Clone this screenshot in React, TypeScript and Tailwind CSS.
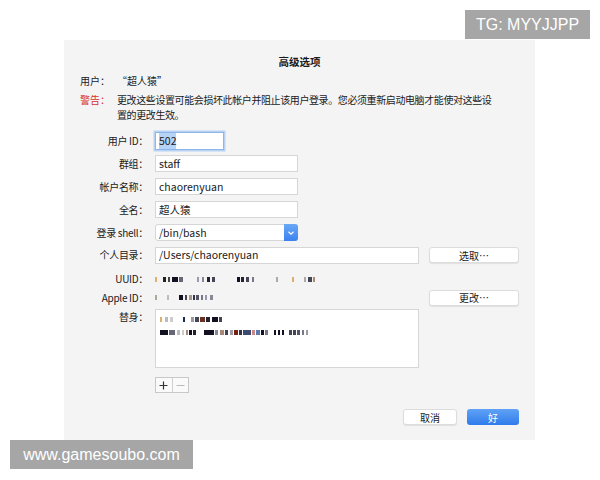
import React from "react";

type Seg = [number, number, string]; // gap before, width, colour

const uuid: Seg[] = [
  [0, 2, "#e0b070"], [6, 3, "#222"], [2, 2, "#444"], [2, 6, "#112"], [1, 4, "#667"],
  [14, 2, "#99a"], [3, 2, "#889"], [3, 3, "#223"], [2, 3, "#445"],
  [22, 3, "#112"], [1, 3, "#223"], [2, 3, "#445"], [3, 2, "#778"],
  [22, 2, "#aaa"], [14, 2, "#d9b070"], [10, 2, "#aaa"], [2, 4, "#445"], [1, 2, "#a87"],
];
const appleId: Seg[] = [
  [0, 2, "#aa9"], [10, 2, "#bbb"], [10, 4, "#112"], [2, 2, "#445"], [2, 3, "#a98"],
  [1, 2, "#334"], [1, 3, "#556"], [2, 2, "#778"], [2, 2, "#99a"], [3, 3, "#889"],
];
const alias1: Seg[] = [
  [0, 2, "#d9b070"], [3, 3, "#bbb"], [2, 3, "#ccc"], [10, 2, "#1a2a55"], [6, 3, "#99a"],
  [1, 4, "#445"], [1, 5, "#6a3020"], [1, 4, "#223"], [2, 6, "#112"], [1, 3, "#445"],
];
const alias2: Seg[] = [
  [0, 8, "#112"], [1, 6, "#667"], [2, 3, "#bbb"], [2, 2, "#ccc"], [2, 2, "#a87"],
  [1, 3, "#112"], [1, 3, "#223"], [8, 10, "#112"], [1, 3, "#889"], [2, 4, "#a87"],
  [1, 3, "#445"], [2, 3, "#99a"], [1, 4, "#7a2010"], [1, 3, "#334"], [1, 8, "#3a4a70"],
  [1, 3, "#c88"], [1, 4, "#5a7ab0"], [1, 3, "#112"], [1, 3, "#778"], [6, 2, "#112"],
  [2, 2, "#112"], [2, 2, "#112"], [5, 3, "#445"], [1, 3, "#445"], [1, 3, "#556"],
  [2, 2, "#778"], [2, 2, "#99a"],
];

function Pixels({ segs, h = 5 }: { segs: Seg[]; h?: number }) {
  return (
    <div className="flex items-center">
      {segs.map(([g, w, c], i) => (
        <span
          key={i}
          className="inline-block"
          style={{ marginLeft: g, width: w, height: h, background: c }}
        />
      ))}
    </div>
  );
}

function Row({
  label,
  children,
  className = "",
}: {
  label: string;
  children?: React.ReactNode;
  className?: string;
}) {
  return (
    <div className={`flex items-center ${className}`}>
      <div className="w-[84px] text-right text-[10px] tracking-[-0.3px] text-[#1a1a1a] leading-none">
        {label}
      </div>
      <div className="ml-[7px] flex items-center">{children}</div>
    </div>
  );
}

function Field({ value, w = "w-[143px]" }: { value: string; w?: string }) {
  return (
    <div
      className={`${w} h-[17px] bg-white border border-[#d6d6d6] flex items-center px-[3px] text-[10.5px] text-[#1a1a1a]`}
    >
      {value}
    </div>
  );
}

function MacButton({ label, w, className = "" }: { label: string; w: string; className?: string }) {
  return (
    <div
      className={`${w} h-[16px] bg-white border border-[#dcdcdc] rounded-[3px] shadow-[0_1px_1px_rgba(0,0,0,0.08)] flex items-center justify-center text-[10px] text-[#1a1a1a] ${className}`}
    >
      {label}
    </div>
  );
}

export default function App() {
  return (
    <div
      className="relative w-[600px] h-[480px] bg-white overflow-hidden"
      style={{ fontFamily: '"Noto Sans CJK SC", "Noto Sans", sans-serif' }}
    >
      <div className="ml-[64px] pt-[40px]">
        <div className="w-[471px] h-[400px] bg-[#f4f4f4] flex flex-col">
          <div className="mt-[15px] h-[14px] text-center text-[10.5px] font-bold text-[#1a1a1a] leading-[14px]">
            高级选项
          </div>

          <div className="mt-[4px] h-[14px] flex items-center pl-[16px] text-[10px] text-[#1a1a1a]">
            <span className="w-[37px]">用户：</span>
            <span>“超人猿”</span>
          </div>

          <div className="mt-[5px] flex pl-[16px] text-[10px] leading-[15px]">
            <span className="w-[37px] text-[#d6322b] shrink-0">警告：</span>
            <span className="text-[#1a1a1a] tracking-[-0.4px]">
              更改这些设置可能会损坏此帐户并阻止该用户登录。您必须重新启动电脑才能使对这些设
              <br />
              置的更改生效。
            </span>
          </div>

          <Row label="用户 ID：" className="mt-[10px] h-[18px]">
            <div className="w-[69px] h-[18px] bg-white border border-[#8fb6ea] shadow-[0_0_0_1.5px_#b8d2f4] flex items-center px-[3px] text-[10.5px] text-[#1a1a1a]">
              <span className="bg-[#b5d3f7]">502</span>
            </div>
          </Row>
          <Row label="群组：" className="mt-[5px] h-[17px]">
            <Field value="staff" />
          </Row>
          <Row label="帐户名称：" className="mt-[6px] h-[17px]">
            <Field value="chaorenyuan" />
          </Row>
          <Row label="全名：" className="mt-[6px] h-[17px]">
            <Field value="超人猿" />
          </Row>
          <Row label="登录 shell：" className="mt-[6px] h-[17px]">
            <div className="w-[143px] h-[17px] bg-white border border-[#d6d6d6] rounded-[3px] flex items-center text-[10.5px] text-[#1a1a1a]">
              <span className="flex-1 px-[3px]">/bin/bash</span>
              <div className="w-[14px] h-[17px] -mr-px rounded-r-[3px] bg-gradient-to-b from-[#6aa8f6] to-[#3b82ee] flex items-center justify-center">
                <svg width="8" height="6" viewBox="0 0 8 6">
                  <path d="M1.5 1.8 L4 4.2 L6.5 1.8" fill="none" stroke="#fff" strokeWidth="1.2" />
                </svg>
              </div>
            </div>
          </Row>
          <div className="mt-[6px] h-[16px] flex items-center">
            <Row label="个人目录：" className="h-[16px]">
              <Field value="/Users/chaorenyuan" w="w-[264px]" />
            </Row>
            <MacButton label="选取…" w="w-[90px]" className="ml-[10px]" />
          </div>
          <Row label="UUID：" className="mt-[8px] h-[16px]">
            <Pixels segs={uuid} />
          </Row>
          <div className="mt-[3px] h-[15px] flex items-center">
            <Row label="Apple ID：" className="h-[15px]">
              <div className="w-[264px]">
                <Pixels segs={appleId} />
              </div>
            </Row>
            <MacButton label="更改…" w="w-[90px]" className="ml-[10px] h-[15px]" />
          </div>
          <div className="mt-[4px] flex items-start">
            <div className="w-[84px] pt-[3px] text-right text-[10px] tracking-[-0.3px] text-[#1a1a1a] leading-none">
              替身：
            </div>
            <div className="ml-[7px] w-[264px] h-[59px] bg-white border border-[#d6d6d6] flex flex-col pt-[7px] pl-[4px] gap-[8px]">
              <Pixels segs={alias1} h={5} />
              <Pixels segs={alias2} h={5} />
            </div>
          </div>
          <div className="mt-[9px] ml-[91px] flex h-[16px] w-[34px] border border-[#c8c8c8] bg-[#fafafa]">
            <div className="flex-1 flex items-center justify-center border-r border-[#d0d0d0]">
              <svg width="9" height="9" viewBox="0 0 9 9">
                <path d="M4.5 0.5 V8.5 M0.5 4.5 H8.5" stroke="#333" strokeWidth="1.2" />
              </svg>
            </div>
            <div className="flex-1 flex items-center justify-center">
              <svg width="9" height="9" viewBox="0 0 9 9">
                <path d="M0.5 4.5 H8.5" stroke="#bbb" strokeWidth="1" />
              </svg>
            </div>
          </div>
          <div className="mt-[16px] flex justify-end pr-[16px] gap-[10px]">
            <MacButton label="取消" w="w-[54px]" />
            <div className="w-[52px] h-[16px] rounded-[3px] bg-gradient-to-b from-[#5fa2f6] to-[#2f7bea] flex items-center justify-center text-[10px] text-white">
              好
            </div>
          </div>
        </div>
      </div>

      <div
        className="absolute left-[465px] top-[10px] w-[125px] h-[29px] bg-[#a6a6a6] flex items-center justify-center text-white text-[16px]"
        style={{ fontFamily: '"Liberation Sans", Arial, sans-serif' }}
      >
        TG: MYYJJPP
      </div>
      <div
        className="absolute left-[10px] top-[440px] w-[183px] h-[29px] bg-[#a6a6a6] flex items-center justify-center text-white text-[16px]"
        style={{ fontFamily: '"Liberation Sans", Arial, sans-serif' }}
      >
        www.gamesoubo.com
      </div>
    </div>
  );
}
